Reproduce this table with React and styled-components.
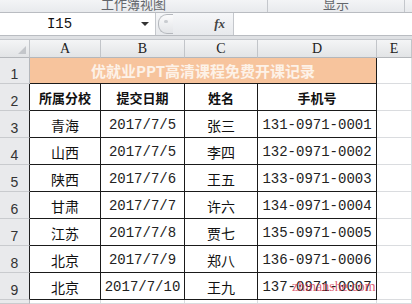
import React from 'react';
import styled, { createGlobalStyle } from 'styled-components';

const GlobalStyle = createGlobalStyle`
  body {
    margin: 0;
    width: 412px;
    height: 304px;
    overflow: hidden;
    background: #fff;
    font-family: "Noto Sans CJK SC", "Liberation Sans", sans-serif;
  }
`;

const Window = styled.div`
  width: 412px;
  height: 304px;
  display: flex;
  flex-direction: column;
  overflow: hidden;
  position: relative;
  background: #d9dbde;
`;

const Ribbon = styled.div`
  height: 12px;
  display: grid;
  grid-template-columns: 268px 137px 1fr;
  background: linear-gradient(#f3f4f6, #e8eaed);
  border-bottom: 1px solid #b9bcc1;
  overflow: hidden;
`;

const RibbonGroup = styled.div`
  border-right: ${p => (p.last ? 'none' : '1px solid #c4c7cc')};
  text-align: center;
  font-size: 13px;
  color: #63666b;
  line-height: 13px;
  margin-top: -3px;
  overflow: hidden;
`;

const FormulaBar = styled.div`
  height: 22px;
  display: flex;
  background: #fff;
  border-bottom: 1px solid #b9bcc1;
`;

const NameBox = styled.div`
  width: 155px;
  display: flex;
  align-items: center;
  border-right: 1px solid #c4c7cc;
  font-family: "Liberation Mono", monospace;
  font-size: 14px;
  color: #111;
`;

const NameText = styled.span`
  flex: 1;
  text-align: center;
  padding-right: 22px;
`;

const Caret = styled.span`
  width: 0;
  height: 0;
  margin-right: 6px;
  border-left: 4px solid transparent;
  border-right: 4px solid transparent;
  border-top: 4px solid #333;
`;

const Middle = styled.div`
  width: 77px;
  display: flex;
  align-items: center;
  background: linear-gradient(#f6f7f9, #e7e9ec);
  border-right: 1px solid #c4c7cc;
`;

const Pill = styled.div`
  width: 14px;
  height: 18px;
  margin-left: 2px;
  border-radius: 9px 0 0 9px;
  border: 1px solid #b5b8bd;
  border-right: none;
  background: linear-gradient(#fbfbfc, #e2e4e7);
  position: relative;
  &::after {
    content: '';
    position: absolute;
    left: 5px;
    top: 5px;
    width: 4px;
    height: 3px;
    border-radius: 2px;
    background: #c9ccd0;
  }
`;

const Fx = styled.span`
  margin-left: auto;
  margin-right: 8px;
  font-family: "Liberation Serif", serif;
  font-style: italic;
  font-weight: bold;
  font-size: 13px;
  color: #444;
`;

const Gap = styled.div`
  height: 3px;
  background: #dfe1e4;
`;

const Sheet = styled.div`
  flex: 1;
  display: grid;
  grid-template-columns: 30px 71px 84px 73px 119px 1fr;
  grid-template-rows: 18px 26px repeat(8, 27px) 1fr;
  background: #fff;
  border-top: 1px solid #c4c7cc;
`;

const ColHead = styled.div`
  display: flex;
  align-items: center;
  justify-content: center;
  background: linear-gradient(#f4f5f6, #e2e4e6);
  border-right: 1px solid #c2c5c9;
  border-bottom: 1px solid #b4b7bb;
  font-family: "Liberation Serif", serif;
  font-size: 14px;
  color: #222;
  position: relative;
`;

const Corner = styled.span`
  position: absolute;
  right: 3px;
  bottom: 3px;
  width: 0;
  height: 0;
  border-left: 8px solid transparent;
  border-bottom: 8px solid #c3c6ca;
`;

const RowHead = styled.div`
  display: flex;
  align-items: flex-end;
  justify-content: center;
  padding-bottom: 1px;
  overflow: hidden;
  background: #e9eaec;
  border-bottom: 1px solid #c9cbce;
  border-right: 1px solid ${p => (p.dark ? '#222' : '#b4b7bb')};
  font-family: "Liberation Sans", sans-serif;
  font-size: 14px;
  color: #333;
`;

const Title = styled.div`
  grid-column: span 4;
  display: flex;
  align-items: center;
  justify-content: center;
  background: #f7c49d;
  border-right: 1px solid #1a1a1a;
  border-bottom: 1px solid #1a1a1a;
  color: #fdf2e8;
  font-weight: bold;
  font-size: 15px;
`;

const Cell = styled.div`
  display: flex;
  align-items: center;
  justify-content: center;
  border-right: 1px solid ${p => (p.plain ? '#dadcdf' : '#1a1a1a')};
  border-bottom: 1px solid ${p => (p.plain ? '#dadcdf' : '#1a1a1a')};
  font-size: ${p => (p.bold ? 13 : 14)}px;
  font-weight: ${p => (p.bold ? 'bold' : 'normal')};
  font-family: ${p => (p.mono ? '"Liberation Mono", monospace' : '"Noto Sans CJK SC", sans-serif')};
  color: ${p => (p.mono ? '#222' : '#111')};
  padding-top: 1px;
`;

const Watermark = styled.span`
  position: absolute;
  left: 292px;
  top: 279px;
  font-family: "Liberation Serif", serif;
  font-size: 14px;
  color: rgba(214, 60, 85, 0.8);
`;

const rows = [
  ['青海', '2017/7/5', '张三', '131-0971-0001'],
  ['山西', '2017/7/5', '李四', '132-0971-0002'],
  ['陕西', '2017/7/6', '王五', '133-0971-0003'],
  ['甘肃', '2017/7/7', '许六', '134-0971-0004'],
  ['江苏', '2017/7/8', '贾七', '135-0971-0005'],
  ['北京', '2017/7/9', '郑八', '136-0971-0006'],
  ['北京', '2017/7/10', '王九', '137-0971-0007'],
];

export default function App() {
  return (
    <Window>
      <GlobalStyle />
      <Ribbon>
        <RibbonGroup>工作簿视图</RibbonGroup>
        <RibbonGroup>显示</RibbonGroup>
        <RibbonGroup last />
      </Ribbon>
      <FormulaBar>
        <NameBox>
          <NameText>I15</NameText>
          <Caret />
        </NameBox>
        <Middle>
          <Pill />
          <Fx>fx</Fx>
        </Middle>
      </FormulaBar>
      <Gap />
      <Sheet>
        <ColHead><Corner /></ColHead>
        {['A', 'B', 'C', 'D', 'E'].map(c => (
          <ColHead key={c}>{c}</ColHead>
        ))}

        <RowHead>1</RowHead>
        <Title>优就业PPT高清课程免费开课记录</Title>
        <Cell plain />

        <RowHead dark>2</RowHead>
        <Cell bold>所属分校</Cell>
        <Cell bold>提交日期</Cell>
        <Cell bold>姓名</Cell>
        <Cell bold>手机号</Cell>
        <Cell plain />

        {rows.map((r, i) => (
          <React.Fragment key={i}>
            <RowHead dark>{i + 3}</RowHead>
            <Cell>{r[0]}</Cell>
            <Cell mono>{r[1]}</Cell>
            <Cell>{r[2]}</Cell>
            <Cell mono>{r[3]}</Cell>
            <Cell plain />
          </React.Fragment>
        ))}

        <RowHead />
        <Cell plain />
        <Cell plain />
        <Cell plain />
        <Cell plain />
        <Cell plain />
      </Sheet>
      <Watermark>zhinanshe.com</Watermark>
    </Window>
  );
}
